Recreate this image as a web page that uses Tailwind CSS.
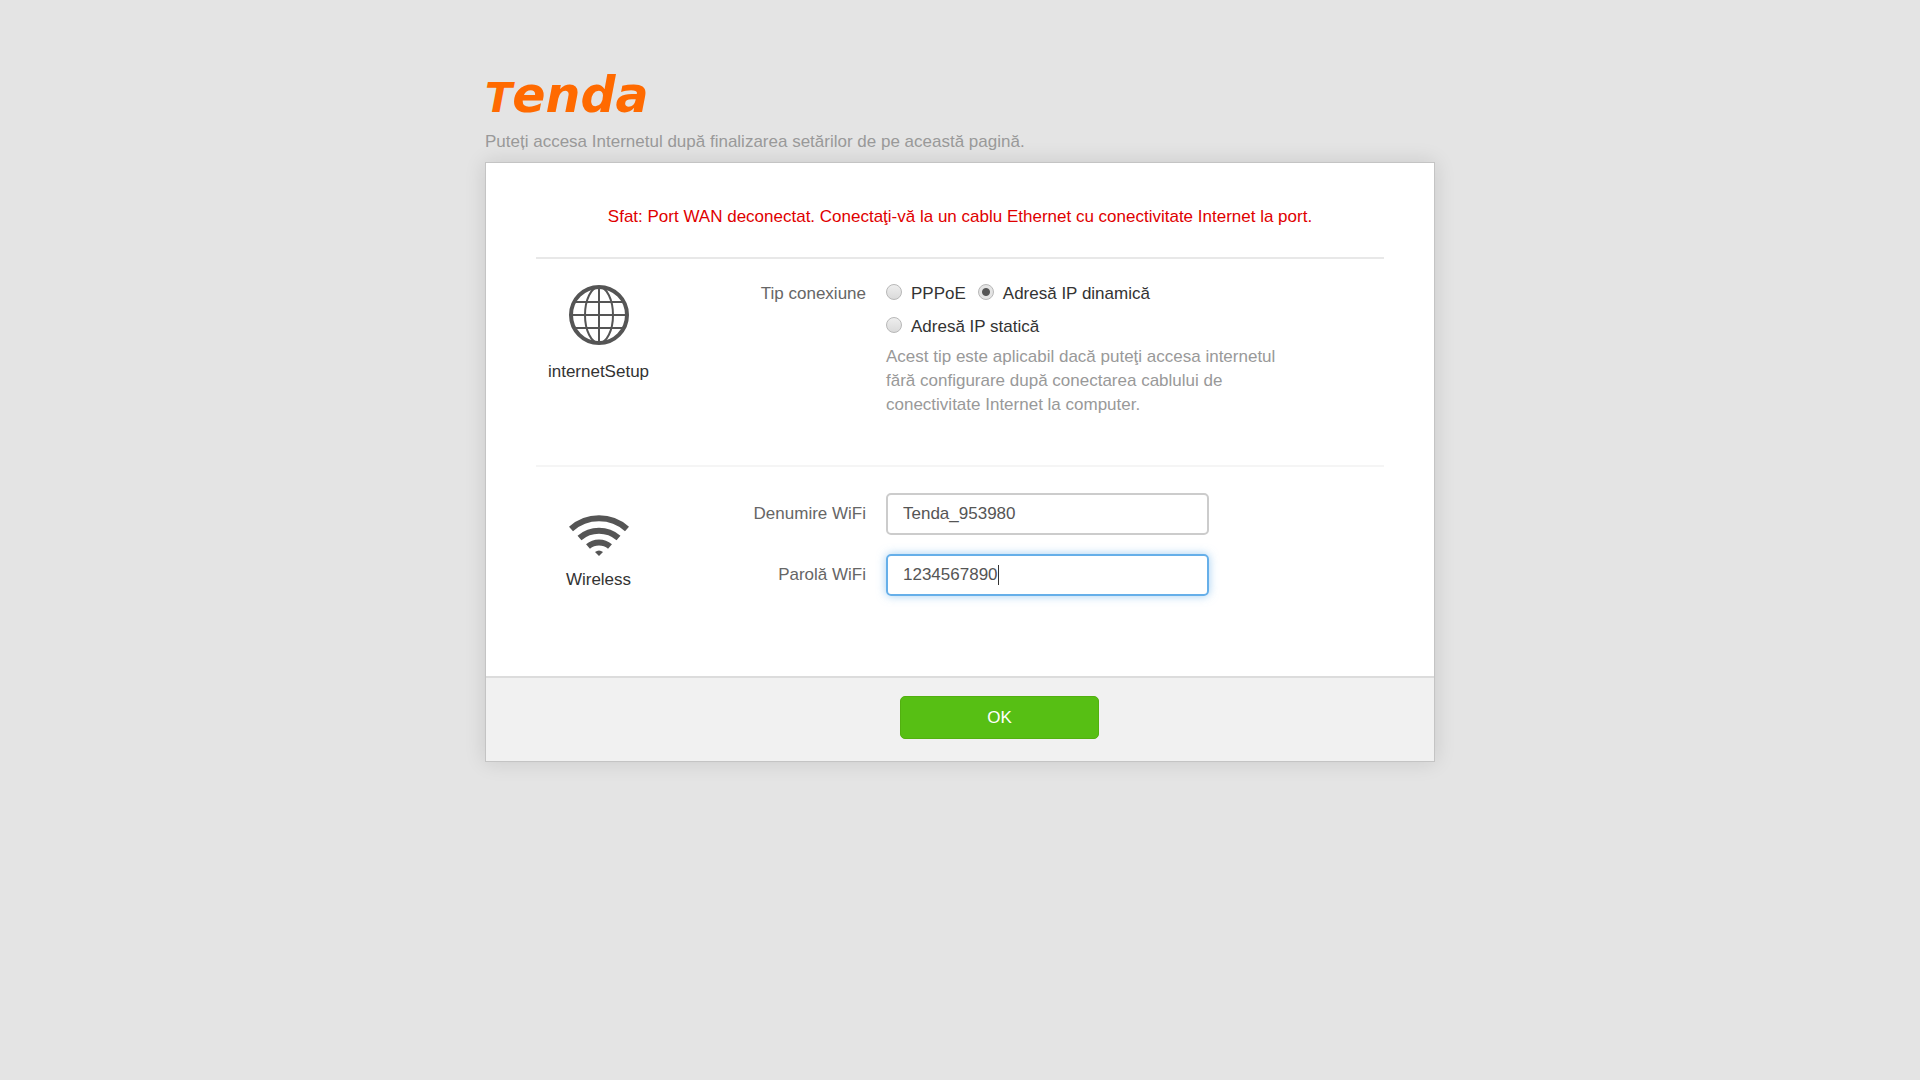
<!DOCTYPE html>
<html lang="ro">
    <head>
        <meta charset="UTF-8" />
        <meta name="viewport" content="width=device-width, initial-scale=1.0" />
        <title>Tenda</title>
        <script src="https://cdn.jsdelivr.net/npm/@tailwindcss/browser@4"></script>
    </head>
    <body class="min-h-screen bg-[#e4e4e4] font-['Liberation_Sans',Arial,sans-serif] text-[17px] leading-6 text-[#333]">
        <div class="mx-auto w-full max-w-[950px] pt-[71px]">
            <!-- Logo -->
            <header>
                <h1 class="font-['DejaVu_Sans',sans-serif] text-[49px] leading-[50px] font-bold text-[#ff6a00] italic"><span class="text-[40px]">T</span>enda</h1>
                <p class="mt-[7px] text-[#999]">Puteți accesa Internetul după finalizarea setărilor de pe această pagină.</p>
            </header>

            <form class="mt-2 border border-[#c4c4c4] bg-white shadow-[0_0_20px_rgba(0,0,0,0.12)]">
                <div class="px-[50px] pt-[42px] pb-20">
                    <p class="pb-7 text-center text-[#e00000]">
                        Sfat: Port WAN deconectat. Conectaţi-vă la un cablu Ethernet cu conectivitate Internet la port.
                    </p>

                    <!-- Internet setup -->
                    <section class="flex border-t-2 border-[#e8e8e8] pt-5 pb-12">
                        <div class="flex w-[125px] flex-col items-center pt-[5px]">
                            <svg class="size-[62px]" viewBox="0 0 62 62" fill="none" stroke="#555">
                                <circle cx="31" cy="31" r="28" stroke-width="4" />
                                <ellipse cx="31" cy="31" rx="14" ry="28" stroke-width="2" />
                                <path d="M31 3V59M3 31H59M7 18H55M7 44H55" stroke-width="2" />
                            </svg>
                            <h2 class="mt-[14px]">internetSetup</h2>
                        </div>
                        <fieldset class="flex-1">
                            <legend class="float-left mr-5 w-[205px] pt-[3px] text-right text-[#666]">Tip conexiune</legend>
                            <div class="float-left w-[420px] pt-[3px]">
                                <div class="flex flex-wrap gap-x-3 gap-y-[9px]">
                                    <label class="flex items-center gap-[9px]">
                                        <input type="radio" name="type" class="mb-1 size-4 appearance-none rounded-full border border-[#b8b8b8] bg-linear-to-b from-[#eee] to-[#dadada]" />
                                        PPPoE
                                    </label>
                                    <label class="flex items-center gap-[9px]">
                                        <input type="radio" name="type" checked class="mb-1 size-4 appearance-none rounded-full border border-[#b8b8b8] bg-radial from-[#555] from-35% to-[#e4e4e4] to-45%" />
                                        Adresă IP dinamică
                                    </label>
                                    <label class="flex items-center gap-[9px]">
                                        <input type="radio" name="type" class="mb-1 size-4 appearance-none rounded-full border border-[#b8b8b8] bg-linear-to-b from-[#eee] to-[#dadada]" />
                                        Adresă IP statică
                                    </label>
                                </div>
                                <p class="mt-[6px] text-[#999]">
                                    Acest tip este aplicabil dacă puteţi accesa internetul fără configurare după conectarea cablului de conectivitate Internet la computer.
                                </p>
                            </div>
                        </fieldset>
                    </section>

                    <!-- Wireless -->
                    <section class="flex border-t-2 border-[#f5f5f5] pt-[26px]">
                        <div class="flex w-[125px] flex-col items-center pt-5">
                            <svg class="h-11 w-[60px]" viewBox="0 0 60 44" fill="none" stroke="#555" stroke-width="6">
                                <path d="M2 16A42 42 0 0 1 58 16" />
                                <path d="M10.500 25A30 30 0 0 1 49.500 25" />
                                <path d="M19 33.500A17 17 0 0 1 41 33.500" />
                                <path d="M26 39Q30 36 34 39L30 43Z" fill="#555" stroke="none" />
                            </svg>
                            <h2 class="mt-[11px]">Wireless</h2>
                        </div>
                        <div class="flex flex-1 flex-col gap-[19px]">
                            <div class="flex items-center">
                                <label for="ssid" class="mr-5 w-[205px] text-right text-[#666]">Denumire WiFi</label>
                                <input type="text" id="ssid" value="Tenda_953980" class="h-[42px] w-[323px] rounded-[5px] border-2 border-[#ccc] px-[15px] text-[#555] outline-none" />
                            </div>
                            <div class="flex items-center">
                                <label for="password" class="mr-5 w-[205px] text-right text-[#666]">Parolă WiFi</label>
                                <div class="relative">
                                    <input type="text" id="password" value="1234567890" class="block h-[42px] w-[323px] rounded-[5px] border-2 border-[#66afe9] px-[15px] text-[#555] caret-transparent shadow-[0_0_10px_rgba(102,175,233,0.6)] outline-none" />
                                    <!-- Text cursor -->
                                    <span class="absolute top-[11px] left-28 h-5 w-px bg-[#333]"></span>
                                </div>
                            </div>
                        </div>
                    </section>
                </div>

                <footer class="border-t-2 border-[#dcdcdc] bg-[#f1f1f1] pt-[18px] pb-[22px] pl-[414px]">
                    <button type="submit" class="block h-[43px] w-[199px] rounded-[5px] border border-[#52b010] bg-[#57bf14] text-white">OK</button>
                </footer>
            </form>
        </div>
    </body>
</html>
